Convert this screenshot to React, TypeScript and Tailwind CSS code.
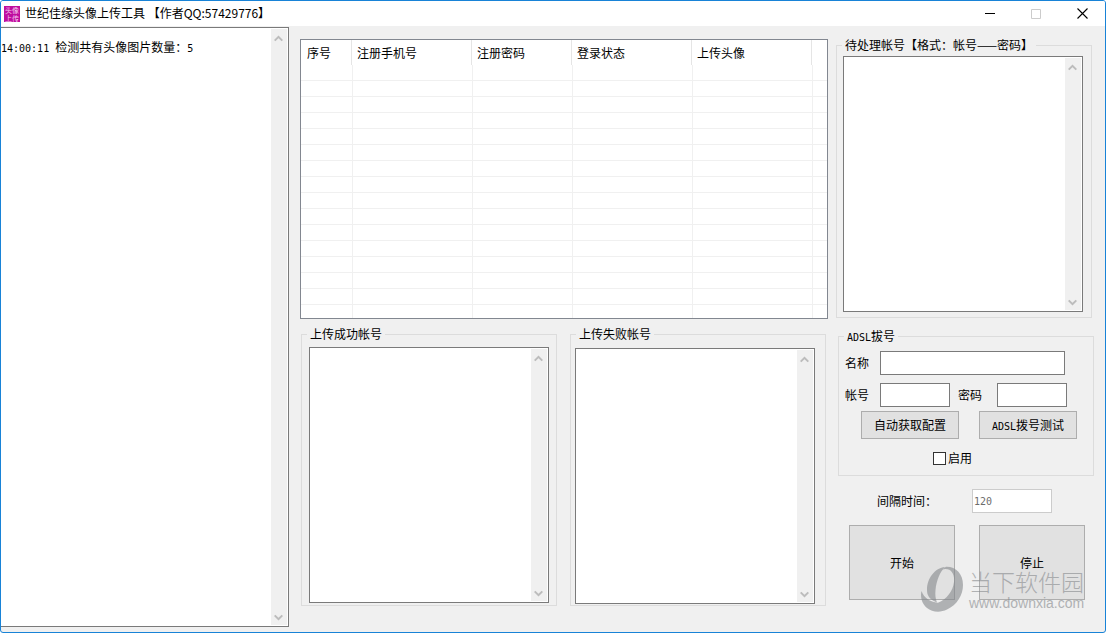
import { useState } from "react";
import type { ReactNode } from "react";

const COLUMNS = [
  { label: "序号", width: "w-[52px]", pad: "pl-1.5" },
  { label: "注册手机号", width: "w-[120px]", pad: "pl-1" },
  { label: "注册密码", width: "w-[100px]", pad: "pl-1" },
  { label: "登录状态", width: "w-[120px]", pad: "pl-1" },
  { label: "上传头像", width: "w-[120px]", pad: "pl-1" },
];
const EMPTY_ROWS = Array.from({ length: 15 }, (_, i) => i);

function Half({ children }: { children: ReactNode }) {
  return <span className="font-['DejaVu_Sans_Mono',monospace] text-[10px] leading-none">{children}</span>;
}

function ScrollTrack() {
  return (
    <div aria-hidden="true" className="flex w-4 shrink-0 flex-col items-center justify-between bg-[#f0f0f0] pt-1.5 pr-px pb-1">
      <svg width="9" height="7" viewBox="0 0 9 7" fill="none" stroke="#bcbcbc" strokeWidth="2">
        <path d="M.7 5.600 4.500 1.800l3.800 3.800" />
      </svg>
      <svg width="9" height="7" viewBox="0 0 9 7" fill="none" stroke="#bcbcbc" strokeWidth="2">
        <path d="M.7 1.400 4.500 5.200l3.800-3.800" />
      </svg>
    </div>
  );
}

function MemoBox({ label }: { label: string }) {
  return (
    <div className="flex h-full border border-[#7a7a7a] bg-white p-px">
      <textarea aria-label={label} className="min-w-0 flex-1 resize-none bg-white px-0.5 outline-none" />
      <ScrollTrack />
    </div>
  );
}

function TitleBar() {
  return (
    <header className="flex h-[25px] shrink-0 items-center bg-white pl-[3px]">
      <span className="flex size-4 flex-col items-center justify-center bg-[#bf0d9e] text-[7px] leading-[8px] text-[#f6c8ee]">
        <span>头像</span>
        <span>上传</span>
      </span>
      <h1 className="ml-[5px] flex-1 pb-0.5 leading-4 whitespace-pre">世纪佳缘头像上传工具 【作者QQ:57429776】</h1>
      <button aria-label="最小化" className="flex h-full w-[46px] items-center justify-center">
        <svg width="11" height="11" viewBox="0 0 11 11" stroke="#000">
          <path d="M0 5.5h10" />
        </svg>
      </button>
      <button aria-label="最大化" disabled className="flex h-full w-[46px] items-center justify-center">
        <svg width="10" height="10" viewBox="0 0 10 10" fill="none" stroke="#ccc">
          <path d="M.5.5h9v9h-9z" />
        </svg>
      </button>
      <button aria-label="关闭" className="flex h-full w-[46px] items-center justify-center">
        <svg width="11" height="11" viewBox="0 0 11 11" stroke="#000" strokeWidth="1.1">
          <path d="m.5.5 10 10m0-10-10 10" />
        </svg>
      </button>
    </header>
  );
}

function AccountTable() {
  return (
    <div className="h-[280px] shrink-0 overflow-hidden border border-[#828790] bg-white">
      <table className="w-full table-fixed border-separate border-spacing-0">
        <thead>
          <tr className="h-[25px]">
            {COLUMNS.map((c) => (
              <th key={c.label} scope="col" className={`${c.width} p-0 pr-px text-left font-normal`}>
                <div className={`${c.pad} h-[25px] border-r border-[#e5e5e5] leading-[26px]`}>{c.label}</div>
              </th>
            ))}
            <td />
          </tr>
        </thead>
        <tbody>
          {EMPTY_ROWS.map((r) => (
            <tr key={r} className="h-4">
              {COLUMNS.map((c) => (
                <td key={c.label} className="border-r border-b border-[#f0f0f0] p-0" />
              ))}
              <td className="border-b border-[#f0f0f0] p-0" />
            </tr>
          ))}
          <tr className="h-4">
            {COLUMNS.map((c) => (
              <td key={c.label} className="border-r border-[#f0f0f0] p-0" />
            ))}
            <td className="p-0" />
          </tr>
        </tbody>
      </table>
    </div>
  );
}

function Watermark() {
  return (
    <div className="pointer-events-none absolute right-[21px] bottom-5 flex items-center text-[#85888c] opacity-60">
      <svg width="43" height="46" viewBox="0 0 43 46" fill="currentColor">
        <path d="M25 1C15 2 7 12 7 24c0 5 2 9.500 10 12.500C15.500 33 15 29 15.500 24 16.500 14 20 6 25 1Z" />
        <path d="M22 3.500C31 1 35 8 34 16c-1 9-7 17-16 20.800C10 36 4 32 1.500 25 0 31 2 38 7 42c5 4 13 5 20 1.500C37 39 43 29 43 19 43 8 36 .5 26 .8Z" />
      </svg>
      <div className="ml-1.5 w-[115px]">
        <div className="text-[23px] leading-7 font-light whitespace-nowrap">当下软件园</div>
        <div className="font-['Liberation_Sans',sans-serif] text-[14px] leading-4">www.downxia.com</div>
      </div>
    </div>
  );
}

const input = "h-6 border border-[#7a7a7a] bg-white px-px outline-none";
const button = "border border-[#adadad] bg-[#e1e1e1]";
const group = "min-w-0 border border-[#dcdcdc]";

export default function App() {
  const [enabled, setEnabled] = useState(false);
  return (
    <div className="relative flex min-h-screen flex-col overflow-hidden rounded-[3px] border border-[#1883d7] bg-[#f0f0f0] font-['Noto_Sans_CJK_SC',sans-serif] text-[12px] leading-4 text-black">
      <TitleBar />
      <main className="flex flex-1">
        <section
          aria-label="日志"
          className="mt-px mb-[5px] flex w-[288px] shrink-0 border-y border-r border-[#7a7a7a] bg-white py-px pr-px"
        >
          <div role="log" className="flex-1 pt-2.5 whitespace-pre">
            <Half>14:00:11 </Half>检测共有头像图片数量：<Half>5</Half>
          </div>
          <ScrollTrack />
        </section>

        <section className="flex min-w-0 flex-1 flex-col pt-[13px] pr-2 pb-[26px] pl-[11px]">
          <AccountTable />
          <div className="mt-[7px] grid flex-1 grid-cols-2 gap-[13px] pr-0.5 pl-px">
            <fieldset className={`${group} flex flex-col px-[7px] pb-0.5`}>
              <legend className="-ml-0.5 px-[3px]">上传成功帐号</legend>
              <div className="h-full pt-[5px]">
                <MemoBox label="上传成功帐号" />
              </div>
            </fieldset>
            <fieldset className={`${group} flex flex-col pr-2.5 pb-px pl-1`}>
              <legend className="ml-px px-[3px]">上传失败帐号</legend>
              <div className="h-full pt-1.5">
                <MemoBox label="上传失败帐号" />
              </div>
            </fieldset>
          </div>
        </section>

        <section className="flex w-[269px] shrink-0 flex-col pt-[11px] pb-8">
          <fieldset className={`${group} mr-[13px] flex flex-1 flex-col pr-2 pb-[5px] pl-1.5`}>
            <legend className="-ml-px px-[3px]">待处理帐号【格式：帐号——密码】</legend>
            <div className="h-full pt-[3px]">
              <MemoBox label="待处理帐号" />
            </div>
          </fieldset>

          <fieldset className={`${group} mt-2.5 mr-[11px] ml-0.5 px-1.5 pb-[9px]`}>
            <legend className="-ml-px h-4 px-[3px]">
              <Half>ADSL</Half>拔号
            </legend>
            <div className="flex items-center pt-[7px]">
              <label htmlFor="name" className="w-[35px]">名称</label>
              <input id="name" className={`${input} w-[185px]`} />
            </div>
            <div className="mt-2 flex items-center">
              <label htmlFor="account" className="w-[35px]">帐号</label>
              <input id="account" className={`${input} w-[70px]`} />
              <label htmlFor="password" className="ml-2 w-[39px]">密码</label>
              <input id="password" className={`${input} w-[70px]`} />
            </div>
            <div className="mt-1 ml-4 flex gap-5">
              <button className={`${button} h-7 w-[98px]`}>自动获取配置</button>
              <button className={`${button} h-7 w-[98px]`}>
                <Half>ADSL</Half>拨号测试
              </button>
            </div>
            <label className="mt-[11px] ml-[88px] flex w-fit items-center gap-0.5">
              <input
                type="checkbox"
                checked={enabled}
                onChange={(e) => setEnabled(e.target.checked)}
                className="size-[13px] appearance-none border border-[#333] bg-white checked:bg-[#333]"
              />
              启用
            </label>
          </fieldset>

          <div className="mt-[13px] flex items-center pl-[41px]">
            <label htmlFor="interval" className="w-[95px]">间隔时间：</label>
            <input
              id="interval"
              disabled
              defaultValue="120"
              className="h-6 w-20 border border-[#ccc] bg-white px-px font-['DejaVu_Sans_Mono',monospace] text-[10px] text-[#6d6d6d]"
            />
          </div>
          <div className="mt-3 ml-[13px] flex gap-6">
            <button className={`${button} h-[75px] w-[106px]`}>开始</button>
            <button className={`${button} h-[75px] w-[106px]`}>停止</button>
          </div>
        </section>
      </main>
      <Watermark />
    </div>
  );
}
